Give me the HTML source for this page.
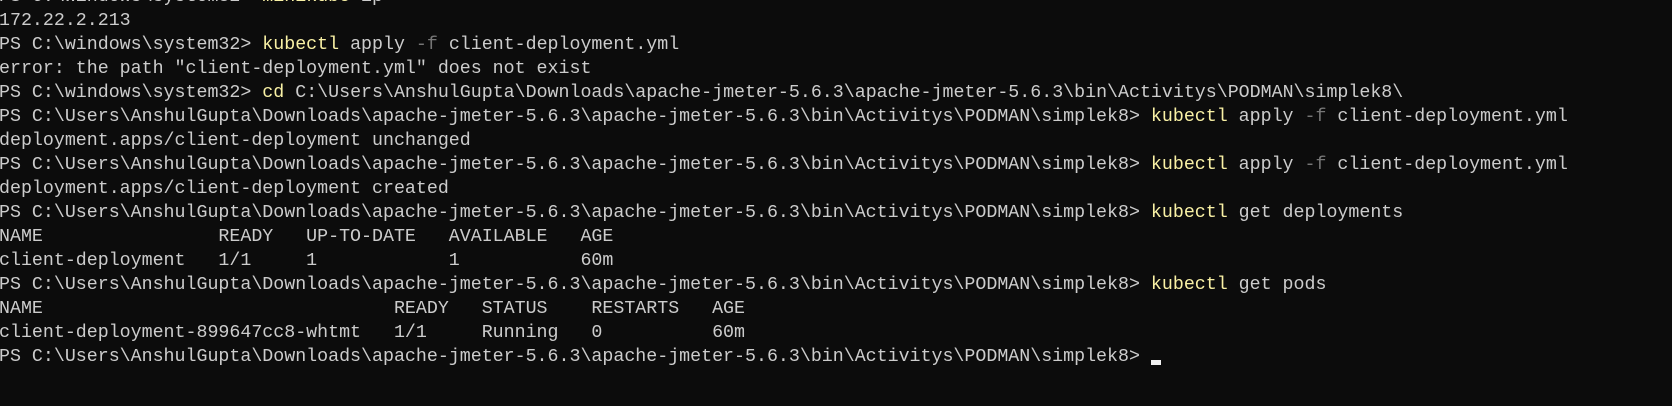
<!DOCTYPE html>
<html><head><meta charset="utf-8"><style>
html,body{margin:0;padding:0;background:#0c0c0c;width:1672px;height:406px;overflow:hidden}
pre{margin:0;position:absolute;left:-1px;top:-15.5px;font-family:"Liberation Mono",monospace;font-size:18.3px;line-height:24px;color:#cccccc}
.y{color:#f9f1a5}.g{color:#767676}
.c{display:inline-block;width:10px;height:5px;background:#f2f2f2;vertical-align:-4px}
</style></head><body>
<pre>PS C:\windows\system32> <span class="y">minikube</span> ip
172.22.2.213
PS C:\windows\system32> <span class="y">kubectl</span> apply <span class="g">-f</span> client-deployment.yml
error: the path "client-deployment.yml" does not exist
PS C:\windows\system32> <span class="y">cd</span> C:\Users\AnshulGupta\Downloads\apache-jmeter-5.6.3\apache-jmeter-5.6.3\bin\Activitys\PODMAN\simplek8\
PS C:\Users\AnshulGupta\Downloads\apache-jmeter-5.6.3\apache-jmeter-5.6.3\bin\Activitys\PODMAN\simplek8> <span class="y">kubectl</span> apply <span class="g">-f</span> client-deployment.yml
deployment.apps/client-deployment unchanged
PS C:\Users\AnshulGupta\Downloads\apache-jmeter-5.6.3\apache-jmeter-5.6.3\bin\Activitys\PODMAN\simplek8> <span class="y">kubectl</span> apply <span class="g">-f</span> client-deployment.yml
deployment.apps/client-deployment created
PS C:\Users\AnshulGupta\Downloads\apache-jmeter-5.6.3\apache-jmeter-5.6.3\bin\Activitys\PODMAN\simplek8> <span class="y">kubectl</span> get deployments
NAME                READY   UP-TO-DATE   AVAILABLE   AGE
client-deployment   1/1     1            1           60m
PS C:\Users\AnshulGupta\Downloads\apache-jmeter-5.6.3\apache-jmeter-5.6.3\bin\Activitys\PODMAN\simplek8> <span class="y">kubectl</span> get pods
NAME                                READY   STATUS    RESTARTS   AGE
client-deployment-899647cc8-whtmt   1/1     Running   0          60m
PS C:\Users\AnshulGupta\Downloads\apache-jmeter-5.6.3\apache-jmeter-5.6.3\bin\Activitys\PODMAN\simplek8> <span class="c"></span></pre>
</body></html>
